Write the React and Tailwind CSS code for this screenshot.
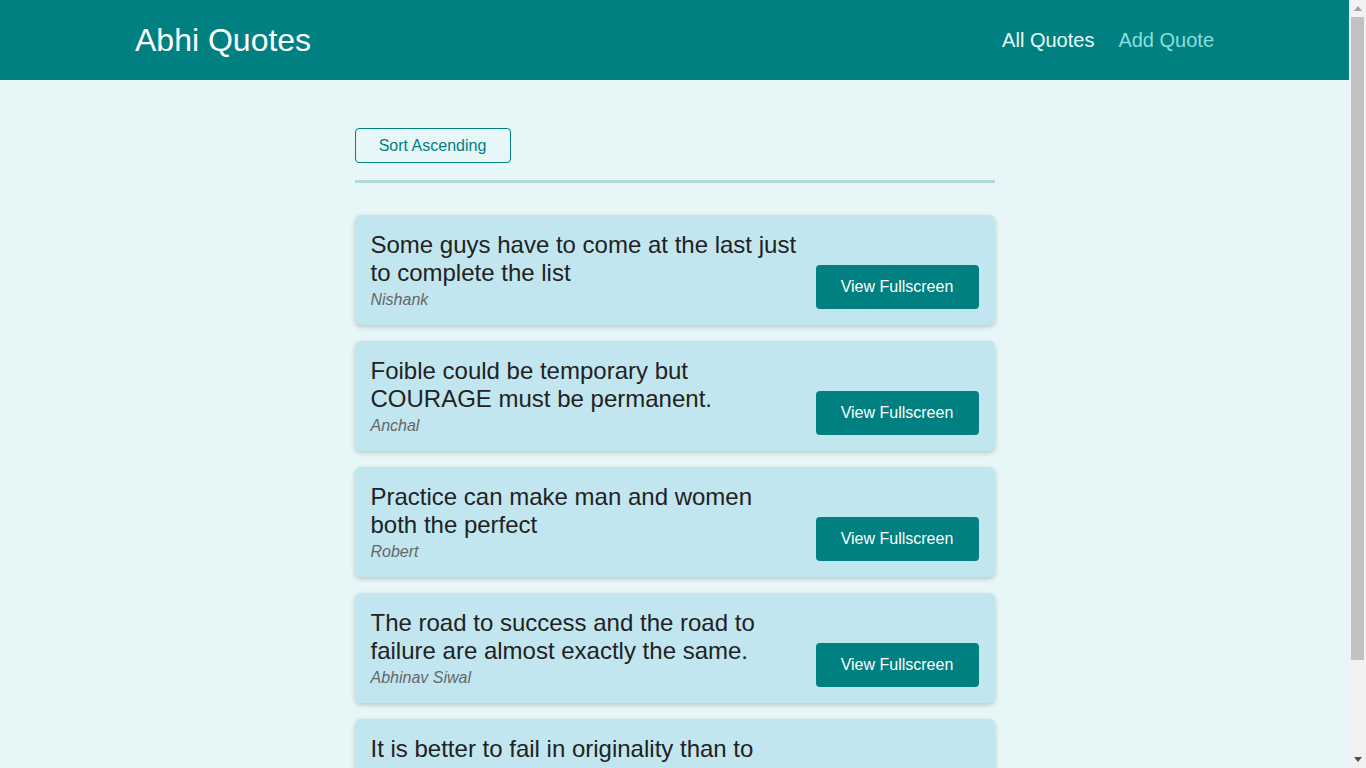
const quotes = [
  { text: 'Some guys have to come at the last just to complete the list', author: 'Nishank' },
  { text: 'Foible could be temporary but COURAGE must be permanent.', author: 'Anchal' },
  { text: 'Practice can make man and women both the perfect', author: 'Robert' },
  { text: 'The road to success and the road to failure are almost exactly the same.', author: 'Abhinav Siwal' },
  { text: 'It is better to fail in originality than to succeed in imitation.', author: 'Herman Melville' },
]

function QuoteItem({ text, author }) {
  return (
    <li className="flex items-end justify-between rounded-md bg-[#c2e6ef] p-4 shadow-[0_2px_5px_rgba(0,0,0,0.2)]">
      <figure className="w-[430px]">
        <blockquote className="text-[24px] leading-[28px] text-[#222]">{text}</blockquote>
        <figcaption className="mt-1 text-base italic leading-[18px] text-[#666]">{author}</figcaption>
      </figure>
      <button className="h-[44px] w-[163px] rounded bg-[#008080] text-base text-white">
        View Fullscreen
      </button>
    </li>
  )
}

// classic windows scrollbar, drawn over the right edge
function Scrollbar() {
  return (
    <div className="fixed top-0 right-0 flex h-screen w-[17px] flex-col bg-[#f1f1f1]">
      <div className="flex h-[17px] items-center justify-center">
        <svg width="8" height="5" viewBox="0 0 8 5">
          <path d="M4 0 L8 5 L0 5 Z" fill="#a3a3a3" />
        </svg>
      </div>
      <div className="mx-[2px] h-[643px] bg-[#c1c1c1]" />
      <div className="flex-1" />
      <div className="flex h-[17px] items-center justify-center">
        <svg width="8" height="5" viewBox="0 0 8 5">
          <path d="M0 0 L8 0 L4 5 Z" fill="#505050" />
        </svg>
      </div>
    </div>
  )
}

export default function App() {
  return (
    <div className="min-h-screen bg-[#e7f7f8] font-['Liberation_Sans',Arial,sans-serif]">
      <div className="mr-[17px]">
        {/* Header */}
        <header className="flex h-20 items-center justify-between bg-[#008080] px-[135px]">
          <div className="text-[32px] text-white">Abhi Quotes</div>
          <nav className="flex gap-6 text-[20px]">
            <a className="text-[#e6fcfc]">All Quotes</a>
            <a className="text-[#88dfdf]">Add Quote</a>
          </nav>
        </header>

        <main className="mx-auto w-[640px] pt-12 pb-12">
          <button className="h-[35px] w-[156px] rounded border border-[#008080] text-base text-[#008080]">
            Sort Ascending
          </button>
          <hr className="mt-[17px] border-0 border-t-[3px] border-[#b3d8de]" />
          <ul className="mt-[32px] flex flex-col gap-4">
            {quotes.map((q) => (
              <QuoteItem key={q.author} {...q} />
            ))}
          </ul>
        </main>
      </div>
      <Scrollbar />
    </div>
  )
}
